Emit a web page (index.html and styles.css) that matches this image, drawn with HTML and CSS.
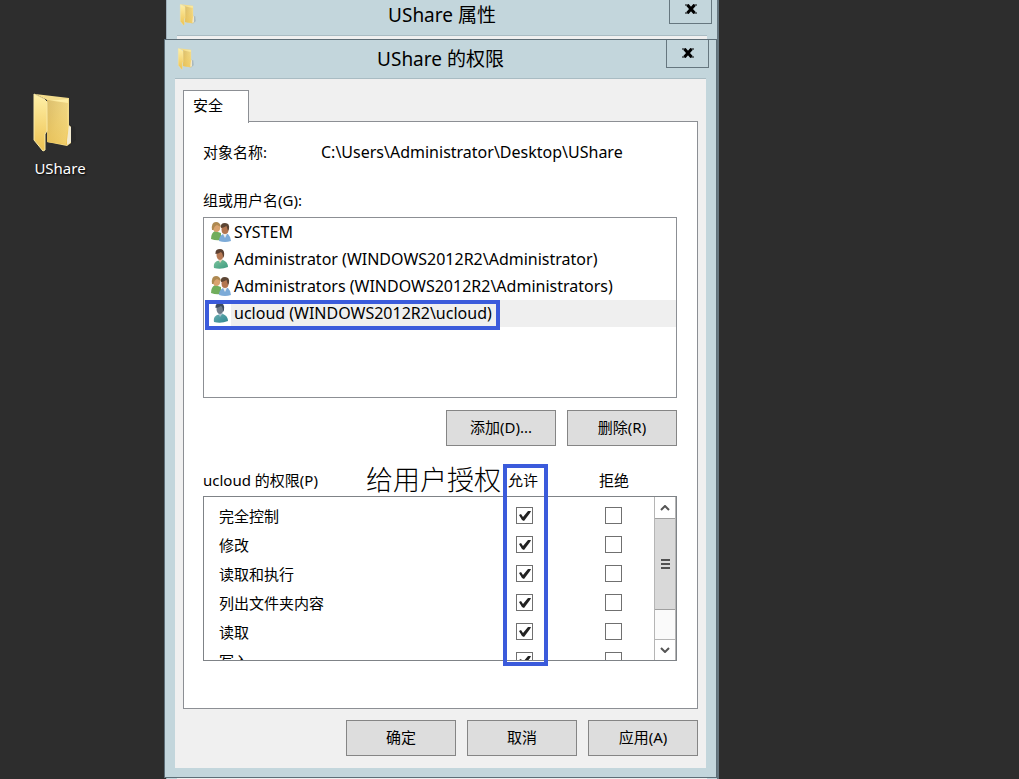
FILE: index.html
```
<!DOCTYPE html>
<html lang="zh-CN">
<head>
<meta charset="utf-8">
<title>UShare 的权限</title>
<link rel="stylesheet" href="styles.css">
</head>
<body>
<svg class="defs" aria-hidden="true">
  <defs>
    <linearGradient id="gold" x1="0" y1="0" x2="0" y2="1"><stop offset="0" stop-color="#fff0a8"/><stop offset="1" stop-color="#edc251"/></linearGradient>
    <linearGradient id="back" x1="0" y1="0" x2="1" y2="1"><stop offset="0" stop-color="#b98f35"/><stop offset=".5" stop-color="#e0bf62"/><stop offset="1" stop-color="#f6dc84"/></linearGradient>
    <linearGradient id="green" x1="0" y1="0" x2="1" y2="1"><stop offset="0" stop-color="#7cc49c"/><stop offset="1" stop-color="#3d9a80"/></linearGradient>
    <linearGradient id="teal" x1="0" y1="0" x2="1" y2="1"><stop offset="0" stop-color="#69aeb0"/><stop offset="1" stop-color="#2d8690"/></linearGradient>
    <symbol id="folder" viewBox="0 0 44 60">
      <path d="M15 49L36 53L43 47L42 34L36 32Z" fill="#151515" opacity=".15"/>
      <path d="M2 1L36 5V32L38 34V50L34 53L14 49V7Z" fill="#f3dc8c"/>
      <path d="M15 8L35 6V52L14 49Z" fill="url(#gold)"/>
      <path d="M14 7L35 10L33 51L14 49Z" fill="url(#back)" opacity=".5"/>
      <path d="M36 33L38 34V49L34 52V47Z" fill="#f2ead0"/>
      <path d="M1 1L11 6L14 9V38L12 41V57L10 58L1 47Z" fill="url(#gold)" stroke="#f9e9a6"/>
    </symbol>
    <symbol id="user" viewBox="0 0 20 20">
      <path d="M3 19Q2 14 6 12L12 11Q17 13 17 18Q10 21 3 19Z" fill="url(#green)"/>
      <path d="M7 10L9 14L12 10Z" fill="#e8d3bd"/>
      <ellipse cx="9" cy="6" rx="3.500" ry="5" fill="#b77a55"/>
      <path d="M4.500 5Q4 0 9 0Q14 0 13 7L12 9Q12 4 10 3Q7 5 4.500 5Z" fill="#5b4032"/>
    </symbol>
    <symbol id="user-selected" viewBox="0 0 20 20">
      <path d="M3 19Q2 14 6 12L12 11Q17 13 17 18Q10 21 3 19Z" fill="url(#teal)"/>
      <path d="M7 10L9 14L12 10Z" fill="#a9c1cf"/>
      <ellipse cx="9" cy="6" rx="3.500" ry="5" fill="#6f7b88"/>
      <path d="M4.500 5Q4 0 9 0Q14 0 13 7L12 9Q12 4 10 3Q7 5 4.500 5Z" fill="#3e4c60"/>
    </symbol>
    <symbol id="group" viewBox="0 0 20 20">
      <path d="M0 17Q0 11 4 9L10 11V18Q5 19 0 17Z" fill="#71ad5c"/>
      <ellipse cx="5.500" cy="5.500" rx="3.800" ry="4.500" fill="#d9a36f"/>
      <path d="M1 8Q0 0 5 0Q9 0 10 5L6 3Q3 4 2.500 8Z" fill="#ae8951"/>
      <path d="M8 19Q8 14 12 12L17 12Q20 15 20 19Q14 21 8 19Z" fill="#7dabd8"/>
      <path d="M12 12L14 16L16 12Z" fill="#eee"/>
      <ellipse cx="14" cy="7.500" rx="3.500" ry="4.500" fill="#b37650"/>
      <path d="M10 6Q9 1 14 1Q19 1 18 7L17 9L15.500 4Q12 6 10 6Z" fill="#5c4534"/>
    </symbol>
  </defs>
</svg>

<main class="desktop">
  <a class="shortcut" href="#">
    <svg class="shortcut-icon"><use href="#folder"/></svg>
    <span>UShare</span>
  </a>

  <section class="window window-back">
    <header class="titlebar">
      <svg class="title-icon"><use href="#folder"/></svg>
      <h2 class="title">UShare 属性</h2>
      <button class="close" aria-label="关闭"><svg viewBox="0 0 12 10"><path d="M2.500 1L9.500 9M9.500 1L2.500 9"/><path class="serif" d="M0 1H4M8 1H12M0 9H4M8 9H12"/></svg></button>
    </header>
    <div class="client"></div>
  </section>

  <section class="window window-front">
    <header class="titlebar">
      <svg class="title-icon"><use href="#folder"/></svg>
      <h1 class="title">UShare 的权限</h1>
      <button class="close" aria-label="关闭"><svg viewBox="0 0 12 10"><path d="M2.500 1L9.500 9M9.500 1L2.500 9"/><path class="serif" d="M0 1H4M8 1H12M0 9H4M8 9H12"/></svg></button>
    </header>
    <div class="client">
      <button class="tab">安全</button>
      <div class="panel">
        <div class="object">
          <span>对象名称:</span>
          <span class="path">C:\Users\Administrator\Desktop\UShare</span>
        </div>
        <div class="label" id="users-label">组或用户名(G):</div>
        <ul class="users" aria-labelledby="users-label">
          <li class="user"><svg><use href="#group"/></svg><span>SYSTEM</span></li>
          <li class="user"><svg><use href="#user"/></svg><span>Administrator (WINDOWS2012R2\Administrator)</span></li>
          <li class="user"><svg><use href="#group"/></svg><span>Administrators (WINDOWS2012R2\Administrators)</span></li>
          <li class="user selected"><svg><use href="#user-selected"/></svg><span>ucloud (WINDOWS2012R2\ucloud)</span><i class="mark mark-user"></i></li>
        </ul>
        <div class="actions list-actions">
          <button class="btn">添加(D)...</button>
          <button class="btn">删除(R)</button>
        </div>
        <div class="permissions">
          <div class="perm-head">
            <span>ucloud 的权限(P)</span>
            <span class="note">给用户授权</span>
            <span class="allow">允许</span>
            <span class="deny">拒绝</span>
          </div>
          <div class="perm-box">
            <table class="perm-table" aria-label="ucloud 的权限">
              <tr><td>完全控制</td><td class="check check-allow"><input type="checkbox" aria-label="允许 完全控制" checked></td><td class="check"><input type="checkbox" aria-label="拒绝 完全控制"></td></tr>
              <tr><td>修改</td><td class="check check-allow"><input type="checkbox" aria-label="允许 修改" checked></td><td class="check"><input type="checkbox" aria-label="拒绝 修改"></td></tr>
              <tr><td>读取和执行</td><td class="check check-allow"><input type="checkbox" aria-label="允许 读取和执行" checked></td><td class="check"><input type="checkbox" aria-label="拒绝 读取和执行"></td></tr>
              <tr><td>列出文件夹内容</td><td class="check check-allow"><input type="checkbox" aria-label="允许 列出文件夹内容" checked></td><td class="check"><input type="checkbox" aria-label="拒绝 列出文件夹内容"></td></tr>
              <tr><td>读取</td><td class="check check-allow"><input type="checkbox" aria-label="允许 读取" checked></td><td class="check"><input type="checkbox" aria-label="拒绝 读取"></td></tr>
              <tr><td>写入</td><td class="check check-allow"><input type="checkbox" aria-label="允许 写入" checked></td><td class="check"><input type="checkbox" aria-label="拒绝 写入"></td></tr>
            </table>
            <div class="scrollbar">
              <button class="arrow" aria-label="向上滚动"><svg viewBox="0 0 10 6"><path d="M1 5L5 1L9 5"/></svg></button>
              <div class="thumb"><i></i><i></i><i></i></div>
              <button class="arrow arrow-down" aria-label="向下滚动"><svg viewBox="0 0 10 6"><path d="M1 1L5 5L9 1"/></svg></button>
            </div>
          </div>
          <i class="mark mark-allow"></i>
        </div>
      </div>
      <div class="actions">
        <button class="btn">确定</button>
        <button class="btn">取消</button>
        <button class="btn">应用(A)</button>
      </div>
    </div>
  </section>
</main>
</body>
</html>
```

FILE: styles.css
```
* { box-sizing: border-box; }

body {
  margin: 0;
  background: #2d2d2d;
  color: #000;
  font: 15px/20px "Noto Sans", "Noto Sans CJK SC", sans-serif;
}

button { font: inherit; color: inherit; border-radius: 0; padding: 0; }

.defs { position: absolute; width: 0; height: 0; }

.desktop { position: relative; min-height: 100vh; overflow: hidden; }

.shortcut {
  position: absolute;
  left: 20px;
  top: 93px;
  width: 80px;
  display: flex;
  flex-direction: column;
  align-items: center;
  gap: 5px;
  color: #fff;
  text-decoration: none;
  text-shadow: 1px 1px 2px #000;
}
.shortcut-icon { width: 44px; height: 60px; margin-right: 10px; }

.window {
  position: absolute;
  display: flex;
  flex-direction: column;
  width: 553px;
  padding: 0 10px 9px;
  border: 1px solid #5d6e77;
  background: #c3d6dc;
}
.window-back { left: 166px; top: -5px; bottom: -20px; border-color: #9fb0bb; border-right: 2px solid #66767f; }
.window-front { left: 164px; top: 39px; }

.titlebar {
  display: grid;
  grid-template-columns: 43px 1fr 43px;
  align-items: start;
  height: 38px;
  flex: none;
}
.window-back .titlebar { height: 39px; }
.title-icon { width: 20px; height: 22px; margin: 8px 0 0 1px; }
.title { margin: 0; padding-top: 6px; font-size: 19px; line-height: 26px; font-weight: 400; text-align: center; }
.close {
  height: 28px;
  margin-right: -3px;
  margin-left: 3px;
  padding-bottom: 3px;
  border: 1px solid #66777f;
  border-top: 0;
  background: #c3d6dc;
}
.window-back .close { margin-right: -5px; margin-left: 5px; }
.close svg { width: 12px; height: 10px; fill: none; stroke: #000; stroke-width: 3; }
.close .serif { stroke-width: 1; }

.client {
  flex: 1;
  display: flex;
  flex-direction: column;
  padding: 11px 8px 12px;
  background: #f0f0f0;
  border-top: 1px solid #a9bcc3;
}

.tab {
  position: relative;
  align-self: flex-start;
  width: 66px;
  height: 33px;
  padding: 0 16px 4px 0;
  margin-bottom: -2px;
  border: 1px solid #8c8f94;
  border-bottom: 0;
  background: #fff;
}

.panel {
  min-height: 588px;
  padding: 20px 20px 47px 19px;
  border: 1px solid #8c8f94;
  background: #fff;
}

.object { display: grid; grid-template-columns: 118px 1fr; }
.path { font-size: 16px; }
.label { margin: 28px 0 7px; }

.users {
  height: 181px;
  margin: 0;
  padding: 1px 0;
  border: 1px solid #8c8f94;
  list-style: none;
}
.user { position: relative; display: flex; align-items: center; gap: 3px; height: 27px; padding: 0 0 2px 7px; font-size: 16px; }
.user svg { width: 20px; height: 20px; flex: none; }
.selected { background: linear-gradient(to right, #fff 27px, #efefef 27px); }

.mark { border: 4px solid #3b5bdb; pointer-events: none; position: absolute; }
.mark-user { left: 1px; top: 0; width: 295px; height: 30px; }
.mark-allow { left: 300px; top: 1px; width: 45px; bottom: -5px; }

.actions { display: flex; justify-content: flex-end; gap: 11px; margin-top: 11px; }
.list-actions { margin-top: 12px; }
.btn { width: 110px; height: 36px; padding-bottom: 2px; border: 1px solid #858585; background: #dddddd; }

.permissions { position: relative; margin-top: 17px; }
.perm-head {
  display: grid;
  grid-template-columns: 163px 138px 63px 1fr;
  align-items: center;
  height: 33px;
}
.note { font-size: 27px; line-height: 32px; font-weight: 300; white-space: nowrap; }
.allow { padding-left: 4px; }
.deny { padding-left: 32px; }

.perm-box { display: flex; height: 165px; overflow: hidden; border: 1px solid #7f8387; }
.perm-table { flex: 1; width: 100%; align-self: flex-start; margin-top: 4px; border-collapse: collapse; table-layout: fixed; }
.perm-table td { height: 29px; padding: 0 0 0 15px; }
.perm-table .check { width: 81px; padding: 0; }
.perm-table .check-allow { width: 97px; }

.check input {
  appearance: none;
  display: block;
  width: 17px;
  height: 17px;
  margin: 0 auto;
  border: 1px solid #707070;
  background: #fff;
}
.check input:checked::before {
  content: "";
  display: block;
  width: 15px;
  height: 15px;
  background: #222;
  clip-path: polygon(2px 7px, 4px 6px, 6px 9px, 11px 3px, 14px 3px, 13px 5px, 7px 13px, 5px 12px);
}

.scrollbar { display: flex; flex-direction: column; flex: none; width: 22px; border-left: 1px solid #b5b5b5; border-right: 1px solid #b5b5b5; background: #fafafa; }
.arrow { display: grid; place-items: center; height: 21px; border: 0; background: #fff; }
.arrow svg { width: 10px; height: 6px; fill: none; stroke: #555; stroke-width: 2; }
.arrow-down { margin-top: auto; border-top: 1px solid #b5b5b5; }
.thumb {
  display: flex;
  flex-direction: column;
  align-items: center;
  justify-content: center;
  gap: 2px;
  height: 92px;
  border: 1px solid #a0a0a0;
  border-width: 1px 0;
  background: #d9d9d9;
}
.thumb i { width: 9px; height: 2px; background: #505050; }
```
